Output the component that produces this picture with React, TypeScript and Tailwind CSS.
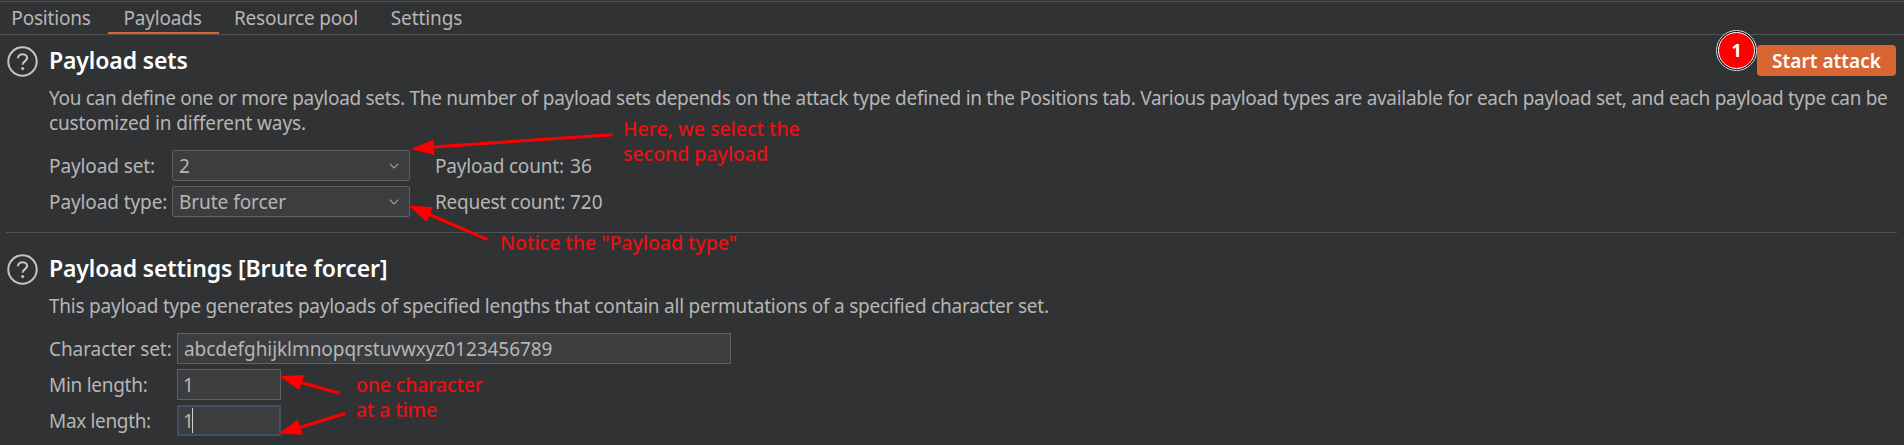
import type { ReactNode } from "react";

function HelpIcon() {
  return (
    <svg className="mt-px h-[31px] w-[31px] shrink-0" viewBox="0 0 31 31" fill="none" stroke="#c3c4c5">
      <circle cx="15.5" cy="15.5" r="14.2" strokeWidth="2" />
      <path d="M11 12.2C11 9.8 13 8.2 15.5 8.2S20.1 9.8 20.1 12C20.1 15.2 15.6 15 15.6 18.7" strokeWidth="2.1" />
      <circle cx="15.6" cy="22.4" r="1.5" fill="#c3c4c5" stroke="none" />
    </svg>
  );
}

function Tab({ label, className, active }: { label: string; className: string; active?: boolean }) {
  return (
    <div className={`flex h-8 items-start justify-center border-b-2 pt-0.5 leading-[28px] ${active ? "border-[#d86633]" : "border-transparent"} ${className}`}>
      {label}
    </div>
  );
}

function SectionHeader({ title, children }: { title: string; children?: ReactNode }) {
  return (
    <div className="flex h-[31px] items-start pl-[7px] pr-2">
      <HelpIcon />
      <h2 className="ml-[11px] grow text-[23px] font-semibold leading-[31px] tracking-[-0.12px] text-white">{title}</h2>
      {children}
    </div>
  );
}

function FormRow({ label, labelClass, children }: { label: string; labelClass: string; children: ReactNode }) {
  return (
    <div className="flex h-[31px] items-start leading-[32px]">
      <span className={labelClass}>{label}</span>
      {children}
    </div>
  );
}

function Select({ value }: { value: string }) {
  return (
    <div className="flex h-[31px] w-[238px] items-start justify-between rounded-[2px] border border-[#5f6062] bg-[#3c3d3f] pl-1.5 pr-2.5 leading-[30px] tracking-[-0.05px]">
      {value}
      <svg className="h-[6px] w-[10px] self-center" viewBox="0 0 10 6" fill="none" stroke="#9fa1a3" strokeWidth="1.1">
        <path d="M.7.6 5 5 9.3.6" />
      </svg>
    </div>
  );
}

function Arrow({ from, neck, head }: { from: string; neck: string; head: string }) {
  return (
    <>
      <path d={`M${from}L${neck}`} stroke="#ff0000" strokeWidth="3" />
      <polygon points={head} fill="#ff0000" />
    </>
  );
}

export default function App() {
  return (
    <div className="relative h-[445px] w-full overflow-hidden whitespace-nowrap bg-[#313234] pt-px font-['Noto_Sans',sans-serif] text-[19px] tracking-[-0.2px] text-[#b6b6b5]">
      <nav className="flex h-[34px] border-y border-[#4f5153]">
        <Tab label="Positions" className="w-[108px] pr-[6px]" />
        <Tab label="Payloads" className="w-[111px] pr-0.5" active />
        <Tab label="Resource pool" className="w-[155px] pr-px tracking-[-0.2px]" />
        <Tab label="Settings" className="w-[106px] pr-px tracking-[-0.1px]" />
      </nav>

      <section className="pt-2.5">
        <SectionHeader title="Payload sets">
          <button className="h-[31px] w-[139px] rounded-[4px] bg-[#d86633] font-semibold tracking-[0.02px] text-white">
            <span className="block h-[31px] leading-[32px]">Start attack</span>
          </button>
        </SectionHeader>
        <p className="ml-[49px] mt-2.5 leading-[25px] tracking-[-0.298px]">
          You can define one or more payload sets. The number of payload sets depends on the attack type defined in the
          Positions tab. Various payload types are available for each payload set, and each payload type can be
          <br />
          <span className="tracking-[-0.12px]">customized in different ways.</span>
        </p>
        <div className="ml-[49px] mt-3.5 flex flex-col gap-[5px]">
          <FormRow label="Payload set:" labelClass="w-[123px] tracking-[-0.1px]">
            <Select value="2" />
            <span className="ml-[25px] w-[135px]">Payload count:</span>
            <span className="tracking-[0.1px]">36</span>
          </FormRow>
          <FormRow label="Payload type:" labelClass="w-[123px] tracking-[-0.1px]">
            <Select value="Brute forcer" />
            <span className="ml-[25px] w-[135px] tracking-[-0.25px]">Request count:</span>
            <span className="tracking-normal">720</span>
          </FormRow>
        </div>
      </section>

      <hr className="ml-1.5 mr-[7px] mt-[15px] border-[#505254]" />

      <section className="pt-5">
        <SectionHeader title="Payload settings [Brute forcer]" />
        <p className="ml-[49px] mt-2.5 leading-[25px] tracking-[-0.235px]">
          This payload type generates payloads of specified lengths that contain all permutations of a specified
          character set.
        </p>
        <div className="ml-[49px] mt-3.5 flex flex-col gap-[5px]">
          <FormRow label="Character set:" labelClass="w-[128px] tracking-[-0.08px]">
            <div className="h-[31px] w-[554px] border border-[#5f6062] bg-[#3c3d3f] pl-1.5 leading-[30px] tracking-[-0.06px]">
              abcdefghijklmnopqrstuvwxyz0123456789
            </div>
          </FormRow>
          <FormRow label="Min length:" labelClass="w-[128px] tracking-[-0.28px]">
            <div className="h-[31px] w-[104px] border border-[#5f6062] bg-[#3c3d3f] pl-[5px] leading-[30px]">1</div>
          </FormRow>
          <FormRow label="Max length:" labelClass="w-[128px] tracking-[-0.35px]">
            <div className="flex h-[31px] w-[104px] items-start border-2 border-[#3d506a] bg-[#3c3d3f] pl-1 leading-[28px]">
              1<span className="-ml-[2px] mt-px h-[25px] w-px bg-[#d0d0d0]" />
            </div>
          </FormRow>
        </div>
      </section>

      <svg className="absolute left-0 top-0 h-[445px] w-[640px]" viewBox="0 0 640 445" fill="none">
        <Arrow from="612.5 134.7" neck="430 147.2" head="410.7,149 433.7,139.7 434.4,155" />
        <Arrow from="487.3 239.3" neck="428 214" head="408.7,205.5 433,207.3 426.7,221.8" />
        <Arrow from="339.3 393.3" neck="299 382" head="279.3,376.3 304.2,375 299.2,390" />
        <Arrow from="345.3 413.5" neck="298 428" head="278.3,433.7 297.7,419.7 302.8,434.7" />
      </svg>

      <div className="absolute left-[623px] top-[116px] text-[19.5px] font-medium leading-[25px] tracking-[-0.03px] text-[#e91012]">
        Here, we select the
        <br />
        second payload
      </div>
      <div className="absolute left-[500px] top-[230px] text-[19.5px] font-medium leading-[25px] tracking-[-0.04px] text-[#e91012]">
        Notice the "Payload type"
      </div>
      <div className="absolute left-[356px] top-[372px] text-[19.5px] font-medium leading-[25px] tracking-[-0.15px] text-[#e91012]">
        one character
        <br />
        at a time
      </div>

      <div className="absolute left-[1716px] top-[30px] flex h-[41px] w-[41px] items-center justify-center rounded-full border border-[#dedede] bg-[#111]">
        <div className="flex h-[37px] w-[37px] items-center justify-center rounded-full border border-white bg-[#ff0000] text-[18px] font-bold text-white">
          1
        </div>
      </div>
    </div>
  );
}
